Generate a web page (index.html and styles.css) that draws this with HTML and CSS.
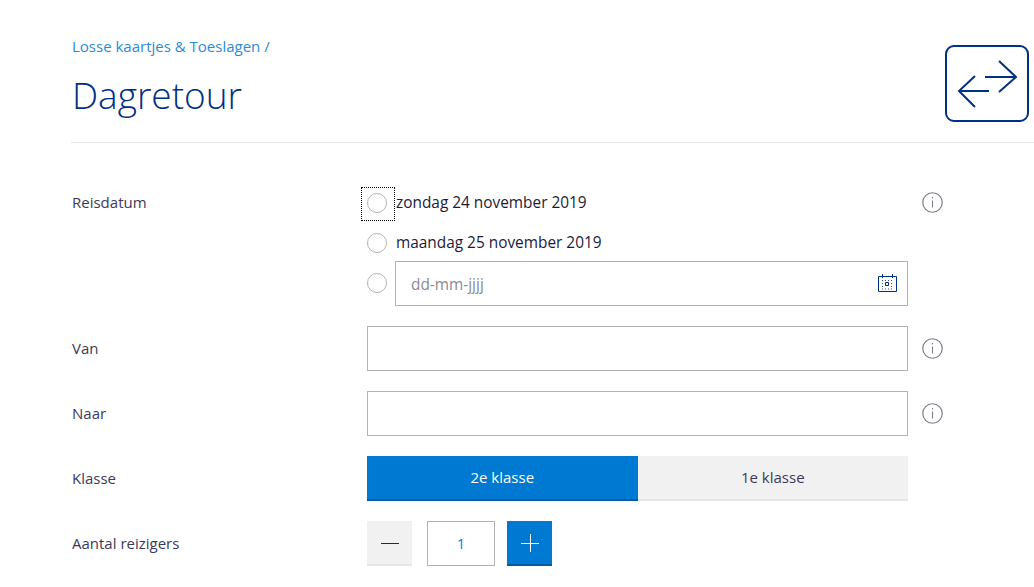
FILE: index.html
```html
<!DOCTYPE html>
<html lang="nl">
<head>
<meta charset="utf-8">
<title>Dagretour</title>
<link rel="stylesheet" href="styles.css">
</head>
<body>
<header class="head">
  <div class="head-text">
    <a class="crumb">Losse kaartjes &amp; Toeslagen /</a>
    <h1 class="title">Dagretour</h1>
  </div>
  <svg class="logo" width="84" height="78" viewBox="0 0 84 78" fill="none" stroke="#003082">
    <rect x="1" y="1" width="82" height="75" rx="8" stroke-width="2"/>
    <path d="M40 32H71M54 16L71 32L54 47" stroke-width="2"/>
    <path d="M44 46H14M30 31L14 46L30 62" stroke-width="2"/>
  </svg>
</header>
<main class="form">
  <div class="row row-date">
    <div class="label">Reisdatum</div>
    <div class="options">
      <div class="option focus"><span class="radio"></span><span class="opt-text">zondag 24 november 2019</span></div>
      <div class="option second"><span class="radio"></span><span class="opt-text">maandag 25 november 2019</span></div>
      <div class="option third">
        <span class="radio"></span>
        <div class="input date-input"><span class="placeholder">dd-mm-jjjj</span>
          <svg class="cal" width="20" height="20" viewBox="0 0 20 20" fill="none" stroke="#003082">
            <path d="M.5 3.5h18v15H.5zM4.5 1v4M14.5 1v4"/>
            <path d="M4 7.5h1M7 7.5h1M10 7.5h1M13 7.5h1M4 10.5h1M13 10.5h1M4 13.5h1M13 13.5h1M4 16h1M7 16h1M10 16h1M13 16h1" stroke-width="1" opacity=".85"/>
            <path d="M7.5 9.5h3v3h-3z"/>
          </svg>
        </div>
      </div>
    </div>
    <svg class="info info-date" width="21" height="21" viewBox="0 0 21 21" fill="none" stroke="#807d8c"><circle cx="10.5" cy="10.5" r="9.75" stroke-width="1.2"/><path d="M10.5 8.5v7M10.5 5v1.6" stroke-width="1.1"/></svg>
  </div>
  <div class="row">
    <label class="label">Van</label>
    <div class="input"></div>
    <svg class="info" width="21" height="21" viewBox="0 0 21 21" fill="none" stroke="#807d8c"><circle cx="10.5" cy="10.5" r="9.75" stroke-width="1.2"/><path d="M10.5 8.5v7M10.5 5v1.6" stroke-width="1.1"/></svg>
  </div>
  <div class="row">
    <label class="label">Naar</label>
    <div class="input"></div>
    <svg class="info" width="21" height="21" viewBox="0 0 21 21" fill="none" stroke="#807d8c"><circle cx="10.5" cy="10.5" r="9.75" stroke-width="1.2"/><path d="M10.5 8.5v7M10.5 5v1.6" stroke-width="1.1"/></svg>
  </div>
  <div class="row">
    <div class="label">Klasse</div>
    <div class="toggle">
      <div class="tog on">2e klasse</div>
      <div class="tog">1e klasse</div>
    </div>
  </div>
  <div class="row">
    <div class="label">Aantal reizigers</div>
    <div class="stepper">
      <div class="step minus"><svg width="20" height="20" viewBox="0 0 20 20" stroke="#003082"><path d="M1 10.5h18"/></svg></div>
      <div class="count">1</div>
      <div class="step plus"><svg width="20" height="20" viewBox="0 0 20 20" stroke="#fff"><path d="M1 10.5h18M10.5 1v18"/></svg></div>
    </div>
  </div>
</main>
</body>
</html>
```
FILE: styles.css
```css
* { box-sizing: border-box; }
html, body { margin: 0; padding: 0; background: #fff; overflow: hidden; }
body { height: 587px; font-family: "Open Sans", "Noto Sans", sans-serif; font-size: 15px; color: #070721; }
.head { display: flex; justify-content: space-between; margin-left: 71px; height: 143px; border-bottom: 1px solid #e6e6e9; padding-top: 36px; padding-right: 5px; }
.head-text { display: flex; flex-direction: column; }
.crumb { color: #2a8ad8; font-size: 15px; line-height: 20px; padding-left: 1px; }
.title { margin: 15px 0 0; padding-left: 1px; font-family: "Open Sans", sans-serif; font-weight: 300; font-size: 37px; line-height: 48px; color: #003082; }
.logo { margin-top: 9px; }
.form { padding: 44px 0 0 72px; display: flex; flex-direction: column; gap: 20px; }
.row { display: grid; grid-template-columns: 295px 541px 35px; align-items: center; height: 45px; }
.label { color: #3c3a5a; font-size: 15px; margin-top: -2px; }
.row-date { height: auto; align-items: start; }
.row-date .label { margin-top: 5px; }
.info { justify-self: end; }
.info-date { margin-top: 5px; }
.options { display: flex; flex-direction: column; }
.option { display: flex; align-items: center; height: 32px; gap: 8px; }
.option.second { margin-top: 8px; }
.option.third { margin-top: 2px; height: 45px; }
.opt-text { font-size: 15.4px; color: #1c1b3a; line-height: 20px; padding-left: 1px; }
.radio { flex: none; width: 20px; height: 20px; border-radius: 50%; border: 1px solid #b3b3b3; background: #fff; }
.third .radio { margin-top: -1px; }
.focus { position: relative; }
.focus::before { content: ""; position: absolute; left: -6px; top: 0; width: 32px; height: 32px; border: 1px dotted #000; }
.input { height: 45px; width: 100%; border: 1px solid #b3b3b3; background: #fff; }
.date-input { display: flex; align-items: center; justify-content: space-between; padding: 0 9px 0 15px; }
.placeholder { color: #8a8a96; font-size: 15.4px; padding-top: 2px; }
.cal { margin-top: -1px; }
.toggle { display: flex; height: 45px; }
.tog { flex: 1; display: flex; align-items: center; justify-content: center; padding-bottom: 2px; background: #f1f1f1; border-bottom: 2px solid #e6e6e6; color: #3c3a5a; font-size: 15px; }
.tog.on { background: #0079d3; border-bottom-color: #005ca0; color: #fff; }
.stepper { display: flex; height: 45px; }
.step { width: 45px; height: 45px; display: flex; align-items: center; justify-content: center; }
.minus { background: #f1f1f1; border-bottom: 2px solid #e6e6e6; }
.plus { background: #0079d3; border-bottom: 2px solid #005ca0; }
.count { width: 68px; height: 45px; margin: 0 12px 0 15px; border: 1px solid #b3b3b3; display: flex; align-items: center; justify-content: center; color: #0079d3; font-size: 14px; }
```
